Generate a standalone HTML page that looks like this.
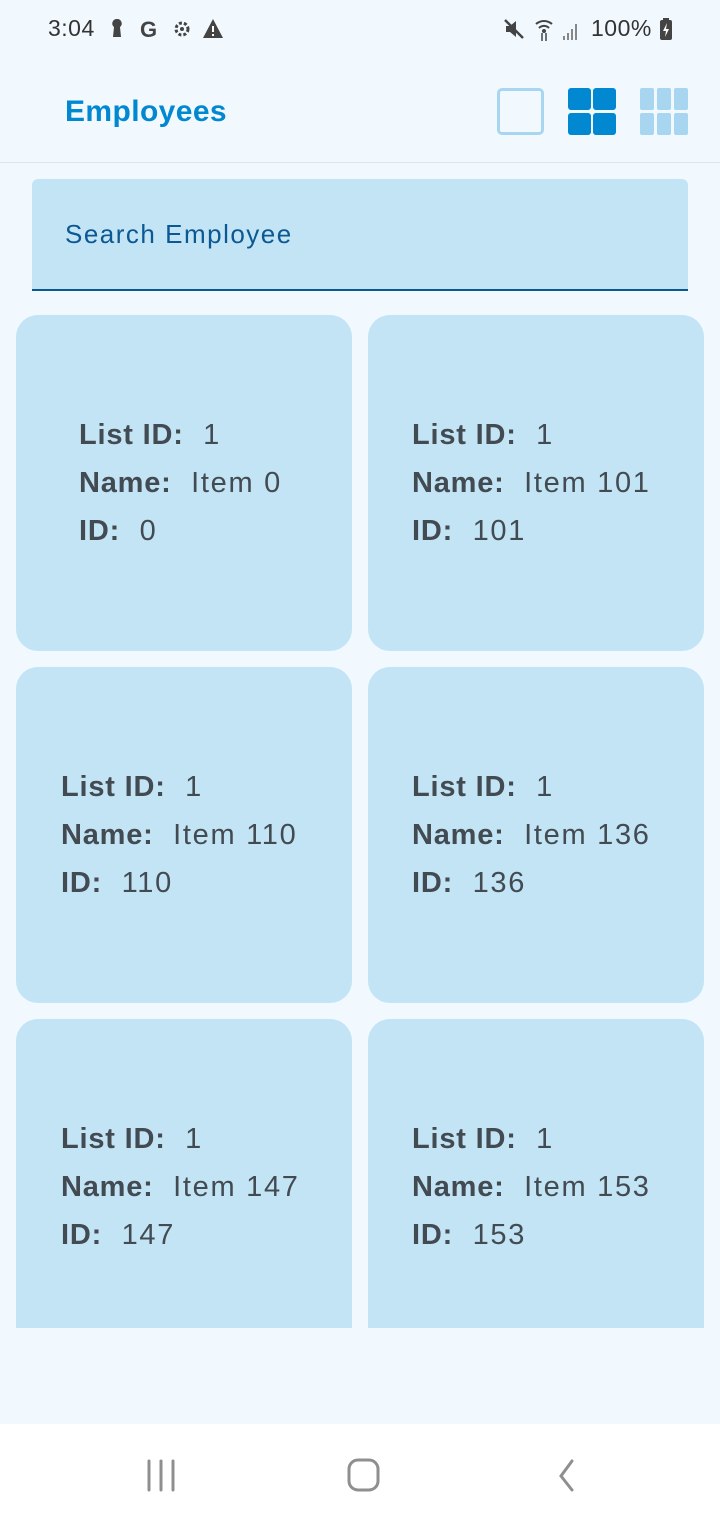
<!DOCTYPE html>
<html><head><meta charset="utf-8"><style>
*{margin:0;padding:0;box-sizing:border-box}
body{width:720px;height:1520px;background:#f2f9fe;font-family:"Liberation Sans",Roboto,sans-serif;position:relative;overflow:hidden}
.abs{position:absolute}
.sb{top:15px;font-size:23px;color:#333;letter-spacing:0.5px}
.card{position:absolute;width:336px;height:336px;background:#c3e4f5;border-radius:22px}
.txt{position:absolute;font-size:29px;color:#434b52;line-height:48px;white-space:nowrap;letter-spacing:1.7px}
.txt b{font-weight:bold;letter-spacing:0.8px}
.clip{position:absolute;left:0;top:0;width:720px;height:1328px;overflow:hidden}
</style></head><body>
<div class="abs sb" style="left:48px">3:04</div>
<svg class="abs" style="left:112px;top:18px" width="115" height="22" viewBox="0 0 115 22">
<path d="M5 1a4.5 4.5 0 0 1 3 8l1 10H1l1-10a4.5 4.5 0 0 1 3-8z" fill="#444"/>
<text x="28" y="19" font-family="Liberation Sans" font-weight="bold" font-size="22" fill="#444">G</text>
<circle cx="70" cy="11" r="6" fill="none" stroke="#444" stroke-width="3" stroke-dasharray="3 2"/><circle cx="70" cy="11" r="2" fill="#444"/>
<path d="M101 1L111 20H91z" fill="#444"/><rect x="100" y="8" width="2" height="6" fill="#fff"/><rect x="100" y="16" width="2" height="2" fill="#fff"/>
</svg>
<svg class="abs" style="left:503px;top:18px" width="85" height="24" viewBox="0 0 85 24">
<path d="M3 8h4l6-5v16l-6-5H3z" fill="#444"/><path d="M2 2l18 18" stroke="#444" stroke-width="2.5"/>
<path d="M33 6a12 12 0 0 1 16 0M36 10a7 7 0 0 1 10 0" stroke="#444" stroke-width="2" fill="none"/><circle cx="41" cy="13" r="2" fill="#444"/><path d="M39 15v8M43 15v8" stroke="#444" stroke-width="1.5"/>
<path d="M60 22h2v-4h-2zM64 22h2v-7h-2zM68 22h2v-11h-2zM72 22h2v-16h-2z" fill="#888"/>
</svg>
<div class="abs sb" style="left:591px">100%</div>
<svg class="abs" style="left:659px;top:18px" width="14" height="22"><rect x="1" y="2" width="12" height="20" rx="2" fill="#444"/><rect x="4" y="0" width="6" height="3" fill="#444"/><path d="M8 5l-4 8h3l-1 6 4-8H7z" fill="#fff"/></svg>

<div class="abs" style="left:65px;top:95px;font-size:30px;font-weight:bold;color:#0288d1;letter-spacing:0.4px">Employees</div>
<div class="abs" style="left:497px;top:88px;width:47px;height:47px;border:3px solid #a8d6f0;border-radius:5px"></div>
<svg class="abs" style="left:568px;top:88px" width="48" height="47"><rect x="0" y="0" width="23" height="22" rx="3" fill="#0288d1"/><rect x="25" y="0" width="23" height="22" rx="3" fill="#0288d1"/><rect x="0" y="25" width="23" height="22" rx="3" fill="#0288d1"/><rect x="25" y="25" width="23" height="22" rx="3" fill="#0288d1"/></svg>
<svg class="abs" style="left:640px;top:88px" width="48" height="47"><g fill="#a8d6f0"><rect x="0" y="0" width="14" height="22" rx="2"/><rect x="17" y="0" width="14" height="22" rx="2"/><rect x="34" y="0" width="14" height="22" rx="2"/><rect x="0" y="25" width="14" height="22" rx="2"/><rect x="17" y="25" width="14" height="22" rx="2"/><rect x="34" y="25" width="14" height="22" rx="2"/></g></svg>
<div class="abs" style="left:0;top:162px;width:720px;height:1px;background:#dde6ec"></div>

<div class="abs" style="left:32px;top:179px;width:656px;height:112px;background:#c3e4f5;border-radius:6px 6px 0 0;border-bottom:2px solid #0b5893"></div>
<div class="abs" style="left:65px;top:219px;font-size:26px;color:#0b5893;letter-spacing:1.5px">Search Employee</div>

<div class="clip">
<div class="card" style="left:16px;top:315px"></div>
<div class="card" style="left:368px;top:315px"></div>
<div class="card" style="left:16px;top:667px"></div>
<div class="card" style="left:368px;top:667px"></div>
<div class="card" style="left:16px;top:1019px"></div>
<div class="card" style="left:368px;top:1019px"></div>
<div class="txt" style="left:79px;top:411px"><b>List ID:</b>&nbsp; 1<br><b>Name:</b>&nbsp; Item 0<br><b>ID:</b>&nbsp; 0</div>
<div class="txt" style="left:412px;top:411px"><b>List ID:</b>&nbsp; 1<br><b>Name:</b>&nbsp; Item 101<br><b>ID:</b>&nbsp; 101</div>
<div class="txt" style="left:61px;top:763px"><b>List ID:</b>&nbsp; 1<br><b>Name:</b>&nbsp; Item 110<br><b>ID:</b>&nbsp; 110</div>
<div class="txt" style="left:412px;top:763px"><b>List ID:</b>&nbsp; 1<br><b>Name:</b>&nbsp; Item 136<br><b>ID:</b>&nbsp; 136</div>
<div class="txt" style="left:61px;top:1115px"><b>List ID:</b>&nbsp; 1<br><b>Name:</b>&nbsp; Item 147<br><b>ID:</b>&nbsp; 147</div>
<div class="txt" style="left:412px;top:1115px"><b>List ID:</b>&nbsp; 1<br><b>Name:</b>&nbsp; Item 153<br><b>ID:</b>&nbsp; 153</div>
</div>

<div class="abs" style="left:0;top:1424px;width:720px;height:96px;background:#fff"></div>
<svg class="abs" style="left:140px;top:1455px" width="440" height="40">
<g stroke="#8f8f8f" stroke-width="3" stroke-linecap="round" fill="none">
<path d="M9 6v29M21 6v29M33 6v29"/>
<rect x="209" y="5" width="29" height="30" rx="9"/>
<path d="M432 6l-11 15 11 14"/>
</g></svg>
</body></html>
